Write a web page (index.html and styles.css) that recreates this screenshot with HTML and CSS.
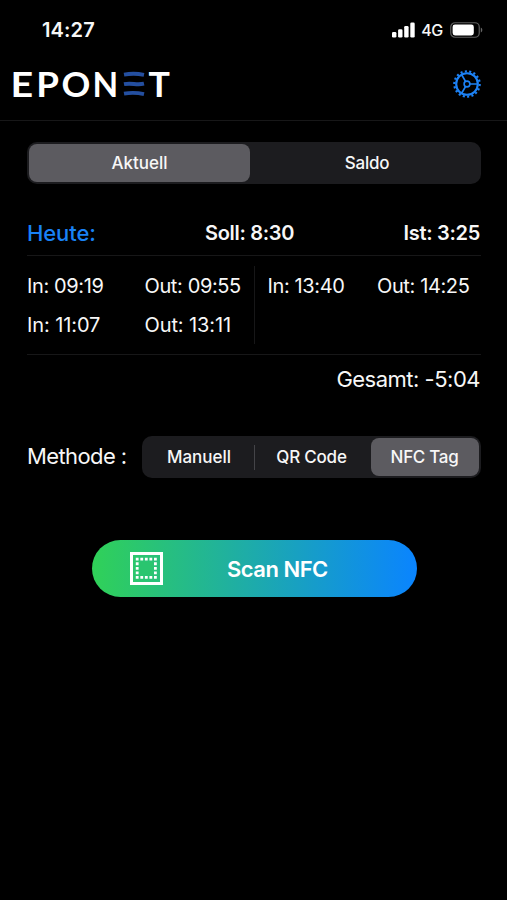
FILE: index.html
```html
<!DOCTYPE html>
<html lang="de">
<head>
<meta charset="utf-8">
<meta name="viewport" content="width=device-width">
<title>EPONET</title>
<link rel="stylesheet" href="styles.css">
</head>
<body>
<div class="status">
  <span class="clock">14:27</span>
  <div class="indicators">
    <svg class="signal" width="23" height="16" viewBox="0 0 23 16" fill="#fff"><rect x="0" y="10" width="4.4" height="5.5" rx="1.3"/><rect x="6.1" y="7.2" width="4.4" height="8.3" rx="1.3"/><rect x="12.2" y="4" width="4.4" height="11.5" rx="1.3"/><rect x="18.3" y="0.5" width="4.4" height="15" rx="1.3"/></svg>
    <span class="network">4G</span>
    <svg class="battery" width="33" height="16" viewBox="0 0 33 16"><rect x="0.75" y="0.75" width="28.5" height="14.5" rx="4.3" fill="none" stroke="#5d5d5d" stroke-width="1.2"/><rect x="2.6" y="2.5" width="21.2" height="11" rx="2.4" fill="#fff"/><path d="M30.8 5.5c2 .7 2 4.3 0 5z" fill="#666"/></svg>
  </div>
</div>
<header class="header">
  <svg class="logo" width="176" height="50" viewBox="0 0 176 50" role="img" aria-label="EPONET">
    <g class="wordmark">
      <text transform="translate(10.4 36.5) scale(1.16 1)">E</text>
      <text transform="translate(36.2 36.5) scale(1.08 1)">P</text>
      <text transform="translate(61.6 36.5) scale(1.05 1)">O</text>
      <text transform="translate(92.4 36.5) scale(.98 1)">N</text>
      <text transform="translate(148.5 36.5) scale(1.05 1)">T</text>
    </g>
    <g fill="none" stroke="#244fa0" stroke-width="3.8"><path d="M124 14.6q10-1.8 20 .2"/><path d="M124 24.2q4-.8 10-.2t10-.3"/><path d="M124 33.6q10-1.8 20 .5"/></g>
  </svg>
  <svg class="gear" width="30" height="30" viewBox="-15 -15 30 30" fill="none" stroke="#1d82f5"><circle r="10.8" stroke-width="2.1"/><circle r="12.7" stroke-width="2.2" stroke-dasharray="2.1 2.333" pathLength="79.8"/><circle r="2.9" stroke-width="1.6"/><path d="M3 0H11M-1.5 -2.6L-5.5 -9.5M-1.5 2.6L-5.5 9.5" stroke-width="1.7"/></svg>
</header>
<main class="content">
  <div class="segments tabs"><span class="segment selected">Aktuell</span><span class="segment">Saldo</span></div>
  <section class="day">
    <div class="summary"><span class="today">Heute:</span><span class="soll">Soll: 8:30</span><span class="ist">Ist: 3:25</span></div>
    <div class="entries">
      <div class="column first"><span>In: 09:19</span><span>Out: 09:55</span><span class="loose">In: 11:07</span><span class="loose">Out: 13:11</span></div>
      <div class="column second"><span>In: 13:40</span><span>Out: 14:25</span></div>
    </div>
    <div class="total"><span>Gesamt: -5:04</span></div>
  </section>
  <div class="method">
    <span class="label">Methode :</span>
    <div class="segments methods"><span class="segment">Manuell</span><span class="segment divided">QR Code</span><span class="segment selected">NFC Tag</span></div>
  </div>
  <div class="scan">
    <svg width="33" height="33" viewBox="0 0 33 33" fill="none" stroke="#fff"><rect x="1.5" y="1.5" width="30" height="30" stroke-width="3"/><path d="M5.8 7.2H28M5.8 25.4H28M5.8 11.75H28M5.8 16.3H28M5.8 20.85H28" stroke-width="2.8" stroke-dasharray="2.8 1.75"/><path d="M10 10H23V23.2H10z" fill="#2ac56f" stroke="none"/></svg>
    <span>Scan NFC</span>
  </div>
</main>
</body>
</html>
```
FILE: styles.css
```css
* { box-sizing: border-box; }
body { margin: 0; height: 900px; background: #000; color: #f7f7f7; font-family: Inter, "Liberation Sans", sans-serif; overflow: hidden; }
span { white-space: nowrap; }
.status { height: 60px; padding: 0 24px 0 42px; display: flex; align-items: center; justify-content: space-between; }
.clock { font-size: 20px; font-weight: 600; letter-spacing: .15px; }
.indicators { display: flex; align-items: center; }
.network { font-size: 16px; font-weight: 500; letter-spacing: -.3px; margin: 0 7px 0 6px; }
.header { height: 61px; padding-right: 25px; display: flex; align-items: flex-start; justify-content: space-between; border-bottom: 1px solid #171718; }
.gear { margin-top: 9px; }
.wordmark { font: 700 34px Lato, sans-serif; fill: #fff; }
.content { padding: 21px 26px 0 27px; }
.segments { display: flex; height: 42px; padding: 2px; border-radius: 10px; background: #1c1c1f; font-size: 17px; font-weight: 500; }
.segment { display: flex; align-items: center; justify-content: center; flex: 1; border-radius: 8px; }
.tabs .segment:last-child { flex: 0 0 229px; padding-left: 5px; letter-spacing: -.2px; }
.selected { background: #5c5b60; }
.summary { margin-top: 27px; height: 45px; display: grid; grid-template-columns: 178px 1fr auto; align-items: center; border-bottom: 1px solid #171718; font-size: 20px; font-weight: 600; letter-spacing: -.3px; }
.ist { padding-right: 1px; }
.today { padding-bottom: 1px; color: #1982f5; font-size: 22px; font-weight: 500; letter-spacing: -.1px; }
.entries { display: flex; height: 99px; padding: 10px 0; border-bottom: 1px solid #171718; font-size: 20px; letter-spacing: -.38px; }
.column { display: grid; grid-auto-rows: 39px; align-items: center; }
.loose { letter-spacing: -.1px; }
.first { width: 228px; grid-template-columns: 117.5px 1fr; border-right: 1px solid #171718; }
.second { padding-left: 12.5px; grid-template-columns: 109.5px 1fr; }
.total { height: 49px; padding: 0 1px 2px 0; display: flex; align-items: center; justify-content: flex-end; font-size: 22px; letter-spacing: -.5px; }
.method { margin-top: 32px; display: flex; align-items: center; justify-content: space-between; }
.label { padding-bottom: 2px; font-size: 22px; letter-spacing: -.6px; }
.methods { width: 339px; }
.methods .segment { flex: 0 0 110px; }
.methods .divided { flex: 1; padding-right: 2px; border-radius: 0; letter-spacing: -.2px; background: linear-gradient(#444448, #444448) left center / 1px 25px no-repeat; }
.methods .selected { flex-basis: 108px; padding-right: 1px; letter-spacing: -.3px; }
.scan { margin: 62px 64.5px 0; height: 57px; padding-left: 38.5px; display: flex; align-items: center; gap: 64px; border-radius: 29px; background: linear-gradient(90deg, #30d158, #0a84ff); color: #fff; font-size: 22px; font-weight: 600; letter-spacing: -.5px; }
```
